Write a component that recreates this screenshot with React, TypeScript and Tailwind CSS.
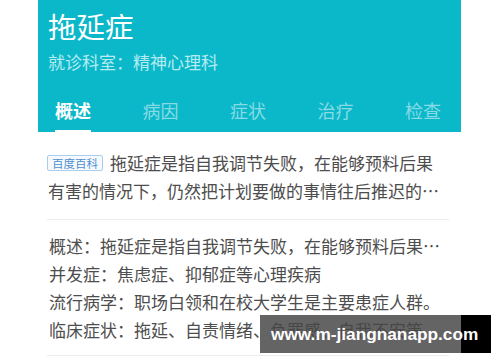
const font = "font-['Noto_Sans_CJK_SC','Noto_Sans',sans-serif]";

const tabs = ["概述", "病因", "症状", "治疗", "检查"];

const facts = [
  "概述：拖延症是指自我调节失败，在能够预料后果…",
  "并发症：焦虑症、抑郁症等心理疾病",
  "流行病学：职场白领和在校大学生是主要患症人群。",
  "临床症状：拖延、自责情绪、负罪感、自我不安等",
];

export default function App() {
  return (
    <div className={`relative h-[362px] w-[500px] overflow-hidden bg-white ${font}`}>
      {/* Header */}
      <div className="ml-[38px] flex h-[132px] w-[423px] flex-col bg-[#0bb8c9] pl-[10px]">
        <h1 className="mt-[8px] text-[28.5px] leading-[36px] text-white">拖延症</h1>
        <p className="mt-[6px] text-[17px] leading-[24px] text-[#b5ebf1]">
          就诊科室：精神心理科
        </p>
        <div className="mt-[24px] flex gap-[51.5px] pl-[7px]">
          {tabs.map((t, i) => (
            <div key={t} className="flex flex-col items-center">
              <span
                className={
                  i === 0
                    ? "text-[18px] font-bold leading-[24px] text-white"
                    : "text-[18px] leading-[24px] text-[#86dbe5]"
                }
              >
                {t}
              </span>
              <div className={i === 0 ? "mt-[8px] h-[3px] w-[36px] bg-white" : "mt-[8px] h-[3px] w-[36px]"} />
            </div>
          ))}
        </div>
      </div>

      {/* Body */}
      <div className="ml-[47px] w-[402px]">
        <div className="pt-[17px] text-[17px] leading-[28px] text-[#4d4d4d]">
          <span className="mr-[7px] inline-flex h-[16px] translate-y-[-2px] items-center rounded-[2px] border border-[#a9cdec] bg-[#f6fafe] px-[4px] align-middle text-[11.5px] leading-none text-[#4f8fd0]">
            百度百科
          </span>
          拖延症是指自我调节失败，在能够预料后果
          <br />
          <span className="ml-[1px]">有害的情况下，仍然把计划要做的事情往后推迟的…</span>
        </div>
        <div className="mt-[14px] h-px bg-[#ececec]" />
        <div className="pt-[12px] pl-[2px]">
          {facts.map((f) => (
            <p key={f} className="whitespace-nowrap text-[17px] leading-[28px] text-[#4d4d4d]">
              {f}
            </p>
          ))}
        </div>
        <div className="mt-[11px] h-px bg-[#ececec]" />
      </div>

      {/* Watermark */}
      <div className="absolute left-[260px] top-[315px] flex h-[38px]">
        <div className="h-full w-[201px] bg-[rgba(70,70,70,0.84)]" />
        <div className="h-full w-[30px] bg-black" />
        <span className="absolute left-[11px] top-0 whitespace-nowrap font-['Liberation_Sans',sans-serif] text-[17.25px] font-bold leading-[38px] text-white">
          www.m-jiangnanapp.com
        </span>
      </div>
    </div>
  );
}
